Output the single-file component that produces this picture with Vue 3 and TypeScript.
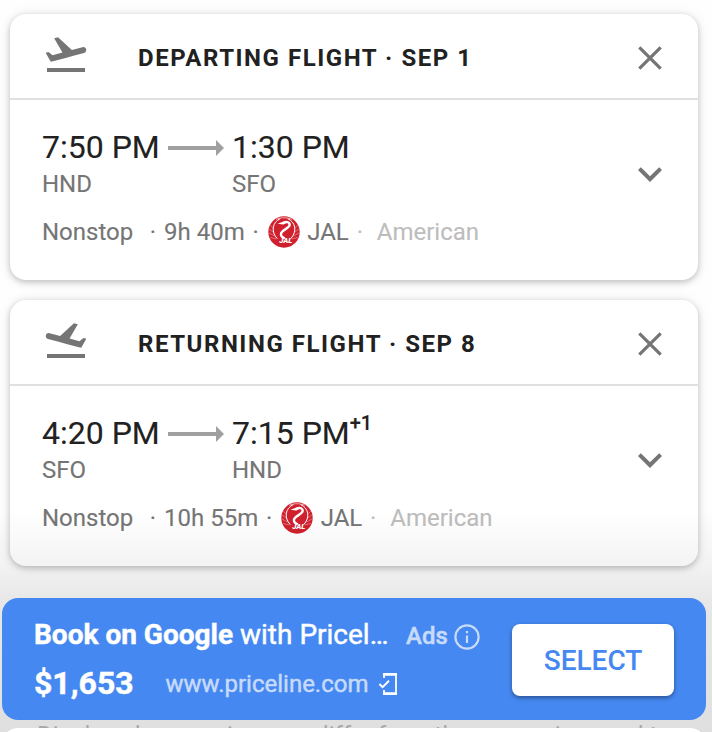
<script setup lang="ts">
interface Flight {
  kind: 'departing' | 'returning'
  title: string
  departTime: string
  arriveTime: string
  dayOffset: string
  from: string
  to: string
  duration: string
}

const flights: Flight[] = [
  {
    kind: 'departing',
    title: 'DEPARTING FLIGHT · SEP 1',
    departTime: '7:50 PM',
    arriveTime: '1:30 PM',
    dayOffset: '',
    from: 'HND',
    to: 'SFO',
    duration: '9h 40m',
  },
  {
    kind: 'returning',
    title: 'RETURNING FLIGHT · SEP 8',
    departTime: '4:20 PM',
    arriveTime: '7:15 PM',
    dayOffset: '+1',
    from: 'SFO',
    to: 'HND',
    duration: '10h 55m',
  },
]
</script>

<template>
  <main class="page">
    <section v-for="flight in flights" :key="flight.kind" class="card">
      <header class="card-header">
        <svg class="plane" :class="flight.kind" viewBox="0 0 24 24">
          <path d="M2.5 19h19v2h-19v-2zm19.57-9.36c-.21-.8-1.04-1.28-1.84-1.06L14.92 10l-6.9-6.43-1.93.51 4.14 7.17-4.97 1.33-1.97-1.54-1.45.39 1.82 3.16.77 1.33 1.6-.43 5.31-1.42 4.35-1.16L21 11.49c.81-.23 1.28-1.05 1.07-1.85z" />
        </svg>
        <h2 class="title">{{ flight.title }}</h2>
        <svg class="close" viewBox="0 0 24 24">
          <path d="M1.3 1.3l21.4 21.4M22.7 1.3l-21.4 21.4" />
        </svg>
      </header>
      <div class="card-body">
        <div class="details">
          <div class="route">
            <div class="stop">
              <span class="time">{{ flight.departTime }}</span>
              <span class="code">{{ flight.from }}</span>
            </div>
            <svg class="arrow" viewBox="0 0 56 16">
              <path d="M0 6h48V0l8 8-8 8v-6H0z" />
            </svg>
            <div class="stop">
              <span class="time">{{ flight.arriveTime }}<span v-if="flight.dayOffset" class="offset">{{ flight.dayOffset }}</span></span>
              <span class="code">{{ flight.to }}</span>
            </div>
          </div>
          <div class="meta">
            <span class="stops">Nonstop</span>
            <span class="dot">·</span>
            <span class="duration">{{ flight.duration }}</span>
            <span class="dot">·</span>
            <svg class="logo" viewBox="0 0 32 32">
              <circle cx="16" cy="16" r="15.7" fill="#d0202e" />
              <g fill="none" stroke="#fff" stroke-linecap="round">
                <path d="M12 2.8C4.4 6 2.6 15.5 9 22.4" stroke-width="1" />
                <path d="M20 2.8C27.6 6 29.4 15.5 23 22.4" stroke-width="1" />
                <path d="M8.5 3.2C12.8 1.2 19.2 1.2 23.5 3.2" stroke-width=".6" />
                <path d="M2.6 9.5l2.6 2.6M1.4 13.2l3.6 2.8M1.4 17.2l4.8 2.6M2.6 21.6l5.2 1.2M29.4 9.5l-2.6 2.6M30.6 13.2l-3.6 2.8M30.6 17.2l-4.8 2.6M29.4 21.6l-5.2 1.2" stroke-width=".5" opacity=".7" />
                <path d="M15.4 6.9C18.8 5 22 6.3 21.6 9.2C21.1 12.6 14.6 13.4 13.2 17C12.4 19.3 13.8 21.2 16 21.8" stroke-width="2.4" />
              </g>
              <path d="M9.6 7.7l6-2.2 2 2-2.6.9z" fill="#fff" />
              <text x="11.2" y="27.2" class="logo-text">JAL</text>
            </svg>
            <span class="airline">JAL</span>
            <span class="dot faint">·</span>
            <span class="partner">American</span>
          </div>
        </div>
        <svg class="chevron" viewBox="0 0 24 24">
          <path d="M16.59 8.59L12 13.17 7.41 8.59 6 10l6 6 6-6z" />
        </svg>
      </div>
    </section>

    <div class="fade"></div>

    <section class="banner">
      <div class="offer">
        <div class="offer-line">
          <span class="partner-title"><b>Book on Google</b> with Pricel…</span>
          <span class="ads">Ads</span>
          <svg class="info" viewBox="0 0 26 26">
            <circle cx="13" cy="13" r="11.6" />
            <path d="M13 11.5v7.5M13 7v2.3" />
          </svg>
        </div>
        <div class="offer-line price-line">
          <span class="price">$1,653</span>
          <span class="site">www.priceline.com</span>
          <svg class="phone" viewBox="0 0 20 24">
            <path d="M6 6V2.5h12v19H6V18" stroke-width="1.8" stroke-linejoin="round" />
            <path d="M6 2.2h12M6 21.8h12" stroke-width="2.4" stroke-linecap="round" />
            <path d="M1.4 12l3.2 3.2 6.4-6.4" stroke-width="2" />
          </svg>
        </div>
      </div>
      <button class="select" type="button">SELECT</button>
    </section>

    <p class="notice">Displayed currencies may differ from the currencies used to</p>
    <div class="next-card"></div>
  </main>
</template>

<style>
body {
  margin: 0;
  background: #fff;
}
</style>

<style scoped>
.page {
  position: relative;
  box-sizing: border-box;
  width: 712px;
  height: 732px;
  padding: 14px 6px 0 2px;
  display: flex;
  flex-direction: column;
  overflow: hidden;
  background: #fefefe;
  font-family: Roboto, "Liberation Sans", sans-serif;
  color: #212121;
}

.card {
  box-sizing: border-box;
  flex: none;
  height: 266px;
  margin: 0 8px 20px;
  border-radius: 16px;
  background: #fff;
  box-shadow: 0 2px 6px rgba(0, 0, 0, 0.22), 0 1px 14px rgba(0, 0, 0, 0.08);
}

.card-header {
  box-sizing: border-box;
  height: 86px;
  display: flex;
  align-items: center;
  padding: 0 36px 0 32px;
  border-bottom: 2px solid #e0e0e0;
}

.plane {
  width: 48px;
  height: 48px;
  margin-top: -4px;
  fill: #757575;
}

.plane.returning {
  transform: scaleX(-1);
}

.title {
  flex: 1;
  margin: 3px 0 0 48px;
  font-size: 24px;
  line-height: 32px;
  font-weight: 700;
  letter-spacing: 1.54px;
  white-space: nowrap;
}

.close {
  width: 24px;
  height: 24px;
  margin-top: 4px;
  fill: none;
  stroke: #757575;
  stroke-width: 3.2;
}

.card-body {
  display: flex;
  justify-content: space-between;
  padding: 27px 24px 0 32px;
}

.route {
  display: flex;
  gap: 8px;
}

.stop {
  display: flex;
  flex-direction: column;
}

.stop:first-child {
  width: 118px;
}

.time {
  display: flex;
  height: 41px;
  font-size: 32px;
  line-height: 40px;
  white-space: nowrap;
  -webkit-text-stroke: 0.12px currentColor;
}

.offset {
  margin-top: -2px;
  font-size: 20px;
  line-height: 24px;
  font-weight: 500;
}

.code {
  font-size: 24px;
  line-height: 32px;
  color: #757575;
  -webkit-text-stroke: 0.12px currentColor;
}

.arrow {
  width: 56px;
  height: 16px;
  margin-top: 13px;
  fill: #a0a0a0;
}

.meta {
  display: flex;
  align-items: center;
  height: 32px;
  margin-top: 16px;
  font-size: 24px;
  line-height: 32px;
  color: #757575;
  white-space: nowrap;
  -webkit-text-stroke: 0.12px currentColor;
}

.stops {
  width: 108px;
}

.dot {
  width: 6px;
  display: flex;
  justify-content: center;
}

.duration {
  margin: 0 8px;
}

.logo {
  width: 32px;
  height: 32px;
  margin: 0 7.5px 0 9px;
}

.logo-text {
  fill: #fff;
  stroke: none;
  font-size: 7.6px;
  font-weight: 900;
  font-style: italic;
}

.faint {
  margin-left: 8px;
  color: #bdbdbd;
}

.partner {
  margin-left: 14px;
  color: #bdbdbd;
}

.chevron {
  width: 48px;
  height: 48px;
  margin-top: 23px;
  fill: #757575;
}

.fade {
  position: absolute;
  left: 0;
  right: 0;
  top: 510px;
  bottom: 0;
  background: linear-gradient(rgba(0, 0, 0, 0) 0, rgba(0, 0, 0, 0.045) 52px, rgba(0, 0, 0, 0.09) 92px, rgba(0, 0, 0, 0.12) 222px);
}

.banner {
  position: relative;
  box-sizing: border-box;
  flex: none;
  display: flex;
  justify-content: space-between;
  align-items: center;
  height: 122px;
  margin-top: 12px;
  padding: 0 32px;
  border-radius: 16px;
  background: #4688f1;
  color: #fff;
}

.offer {
  display: flex;
  flex-direction: column;
}

.offer-line {
  display: flex;
  align-items: center;
  height: 40px;
  white-space: nowrap;
  -webkit-text-stroke: 0.45px currentColor;
}

.partner-title {
  width: 372px;
  font-size: 28px;
  line-height: 40px;
}

.ads {
  width: 48px;
  font-size: 24px;
  line-height: 40px;
  margin-top: 2px;
  color: #c7dbfb;
  font-weight: 500;
}

.info {
  width: 26px;
  height: 26px;
  margin-top: 4px;
  fill: none;
  stroke: #c7dbfb;
  stroke-width: 2.2;
}

.price-line {
  margin-top: 8px;
}

.price {
  width: 131.5px;
  font-size: 32px;
  font-weight: 700;
}

.site {
  width: 212.5px;
  margin-top: 1px;
  font-size: 24px;
  color: #c7dbfb;
}

.phone {
  width: 20px;
  height: 24px;
  margin-top: 2px;
  fill: none;
  stroke: #fff;
}

.select {
  width: 162px;
  height: 72px;
  margin-top: 2px;
  padding: 0;
  border: 0;
  border-radius: 8px;
  background: #fff;
  box-shadow: 0 2px 4px rgba(0, 0, 0, 0.4);
  color: #4688f1;
  font-family: inherit;
  font-size: 28px;
  font-weight: 500;
}

.notice {
  flex: none;
  height: 8px;
  margin: 0;
  padding-left: 35px;
  overflow: hidden;
  font-size: 24px;
  line-height: 31px;
  white-space: nowrap;
  color: #c0c0c0;
}

.next-card {
  position: relative;
  flex: none;
  height: 32px;
  border-radius: 16px;
  background: #fff;
}
</style>
